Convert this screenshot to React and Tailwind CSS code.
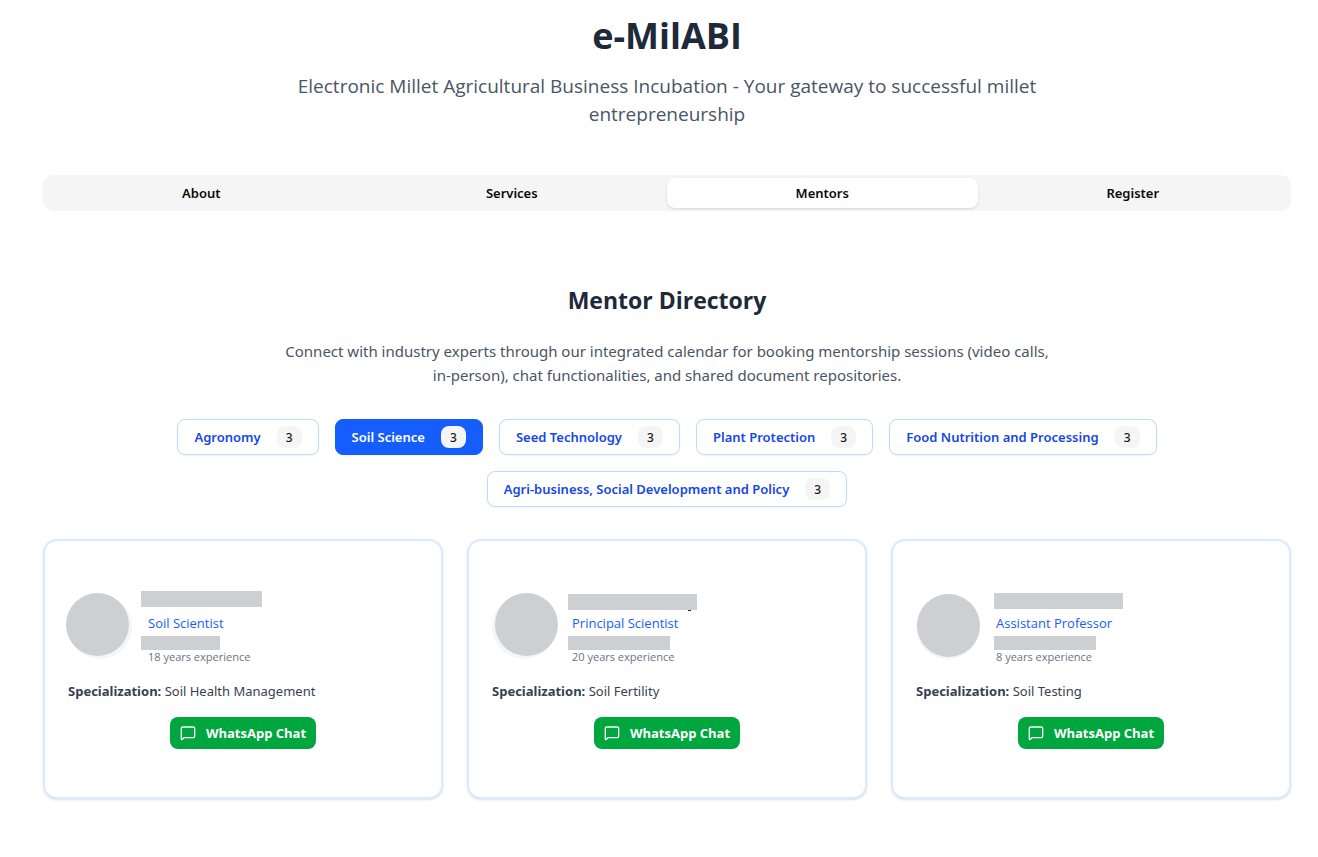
import { useState } from "react";
import { MessageSquare } from "lucide-react";

const tabs = ["About", "Services", "Mentors", "Register"];

const fields = [
  { name: "Agronomy", count: 3 },
  { name: "Soil Science", count: 3 },
  { name: "Seed Technology", count: 3 },
  { name: "Plant Protection", count: 3 },
  { name: "Food Nutrition and Processing", count: 3 },
  { name: "Agri-business, Social Development and Policy", count: 3 },
];

const mentors = [
  {
    title: "Soil Scientist",
    years: 18,
    specialization: "Soil Health Management",
    avatar: "-left-0.5 -top-0.5",
    name: "-left-[7px] top-1.5 w-[121px]",
    place: "-left-[7px] w-[79px]",
  },
  {
    title: "Principal Scientist",
    years: 20,
    specialization: "Soil Fertility",
    avatar: "left-[3px] -top-0.5",
    name: "-left-1 top-[9px] w-[129px]",
    place: "-left-1 w-[102px]",
    tail: true,
  },
  {
    title: "Assistant Professor",
    years: 8,
    specialization: "Soil Testing",
    avatar: "left-px -top-px",
    name: "-left-0.5 top-2 w-[129px]",
    place: "-left-0.5 w-[102px]",
  },
];

function FieldButton({ field, active, onClick }) {
  return (
    <button
      type="button"
      aria-pressed={active}
      onClick={onClick}
      className={`flex h-9 items-center gap-4 rounded-lg border px-4 font-['Noto_Sans','Open_Sans',sans-serif] text-[13px] font-semibold shadow-xs ${
        active
          ? "border-[#155dfc] bg-[#155dfc] text-white"
          : "border-[#bedbff] bg-white text-[#1447e6]"
      }`}
    >
      <span className="pt-0.5">{field.name}</span>
      <span className="flex h-[22px] w-[25px] items-center justify-center rounded-lg bg-[#f5f5f5] pt-0.5 text-xs font-medium text-[#171717]">
        {field.count}
      </span>
    </button>
  );
}

function MentorCard({ mentor }) {
  return (
    <article className="rounded-[14px] border-2 border-[#dbeafe] bg-white px-[23px] pt-11 pb-12 shadow-sm">
      <div className="flex items-center gap-4">
        <div className="relative mt-1 size-16 shrink-0 rounded-full bg-[#f5f5f7]">
          <span className={`absolute size-[63px] rounded-full bg-[#cecfd3] ${mentor.avatar}`} />
        </div>
        <div>
          <div className="relative h-7">
            <span className={`absolute h-4 bg-[#cecfd3] ${mentor.name}`}>
              {mentor.tail && <span className="absolute right-1.5 -bottom-px h-px w-[3px] bg-[#1e2939]" />}
            </span>
          </div>
          <p className="text-[13px] leading-5 text-[#155dfc]">{mentor.title}</p>
          <div className="relative h-4">
            <span className={`absolute top-[3px] h-3.5 bg-[#cecfd3] ${mentor.place}`} />
          </div>
          <p className="text-[11px] leading-4 text-[#6a7282]">{mentor.years} years experience</p>
        </div>
      </div>
      <p className="mt-4 font-['Noto_Sans','Open_Sans',sans-serif] text-[13px] leading-5 text-[#364153]">
        <strong className="font-bold">Specialization:</strong> {mentor.specialization}
      </p>
      <div className="mt-4 flex justify-center">
        <button
          type="button"
          className="flex h-8 items-center gap-2.5 rounded-lg bg-[#00a63e] px-2.5 text-[13px] font-bold text-white"
        >
          <MessageSquare className="size-4" strokeWidth={2} />
          <span className="pt-0.5">WhatsApp Chat</span>
        </button>
      </div>
    </article>
  );
}

export default function App() {
  const [tab, setTab] = useState("Mentors");
  const [field, setField] = useState("Soil Science");

  return (
    <main className="bg-white pt-4 pr-[27px] pb-14 pl-[43px] font-['Open_Sans','Noto_Sans',sans-serif]">
      <header className="mb-[47px] text-center">
        <h1 className="text-4xl leading-10 font-bold text-[#1e2939]">e-MilABI</h1>
        <p className="mx-auto mt-4 max-w-3xl text-[19px] leading-7 text-[#4a5565]">
          Electronic Millet Agricultural Business Incubation - Your gateway to successful millet
          entrepreneurship
        </p>
      </header>

      <div role="tablist" className="grid h-9 grid-cols-4 rounded-[10px] bg-[#f5f5f5] p-[3px]">
        {tabs.map((name) => (
          <button
            key={name}
            type="button"
            role="tab"
            aria-selected={tab === name}
            onClick={() => setTab(name)}
            className={`rounded-lg pt-0.5 font-['Noto_Sans','Open_Sans',sans-serif] text-[13px] font-semibold text-[#0a0a0a] ${
              tab === name ? "bg-white shadow-sm" : ""
            }`}
          >
            {name}
          </button>
        ))}
      </div>

      <section className="mt-[73px]">
        <div className="text-center">
          <h2 className="text-[23px] leading-8 font-bold text-[#1e2939]">Mentor Directory</h2>
          <p className="mx-auto mt-[23px] max-w-3xl font-['Noto_Sans','Open_Sans',sans-serif] text-[15px] leading-6 text-[#4a5565]">
            Connect with industry experts through our integrated calendar for booking mentorship
            sessions (video calls, in-person), chat functionalities, and shared document
            repositories.
          </p>
        </div>

        <div className="mt-8 flex flex-wrap justify-center gap-4">
          {fields.map((item) => (
            <FieldButton
              key={item.name}
              field={item}
              active={field === item.name}
              onClick={() => setField(item.name)}
            />
          ))}
        </div>

        <div className="mt-8 grid grid-cols-3 gap-6">
          {mentors.map((mentor) => (
            <MentorCard key={mentor.title} mentor={mentor} />
          ))}
        </div>
      </section>
    </main>
  );
}
